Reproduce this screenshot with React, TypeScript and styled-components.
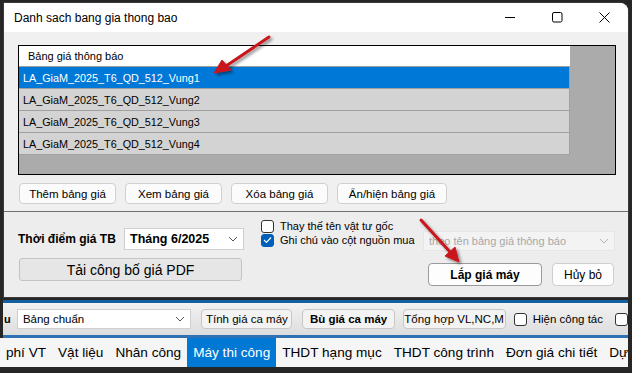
import React from 'react'
import styled, { createGlobalStyle } from 'styled-components'

const GlobalStyle = createGlobalStyle`
  html, body {
    margin: 0;
    padding: 0;
    background: #262626;
    overflow: hidden;
  }
  * {
    box-sizing: border-box;
  }
`

const Screen = styled.div`
  position: relative;
  width: 632px;
  height: 373px;
  background: #262626;
  display: flex;
  flex-direction: column;
  font-family: "Liberation Sans", Arial, sans-serif;
  color: #000;
  overflow: hidden;
`

const Dialog = styled.div`
  margin: 3px 4px 0 4px;
  height: 294px;
  background: #f0f0f0;
  border-top-right-radius: 8px;
  display: flex;
  flex-direction: column;
  overflow: hidden;
  box-shadow: 0 0 0 1px #3a3a3a;
`

const TitleBar = styled.div`
  height: 29px;
  background: #ffffff;
  display: flex;
  align-items: center;
  padding-left: 10px;
  flex-shrink: 0;
`

const TitleText = styled.div`
  font-size: 12px;
  flex: 1;
  padding-top: 1px;
`

const WinButton = styled.div`
  width: 47px;
  height: 29px;
  display: flex;
  align-items: center;
  justify-content: center;
`

const ListPanel = styled.div`
  margin: 13px 12px 0 14px;
  height: 130px;
  background: #ababab;
  border: 1px solid #000;
  flex-shrink: 0;
`

const ListTable = styled.div`
  width: 551px;
  display: flex;
  flex-direction: column;
`

const HeaderCell = styled.div`
  height: 21px;
  background: #ffffff;
  border-bottom: 1px solid #a0a0a0;
  font-size: 11px;
  display: flex;
  align-items: center;
  padding-left: 9px;
`

const Row = styled.div<{ $selected?: boolean }>`
  height: 22px;
  background: ${p => (p.$selected ? '#0078d7' : '#d3d3d3')};
  color: ${p => (p.$selected ? '#ffffff' : '#000000')};
  border-bottom: 1px solid #a0a0a0;
  border-right: 1px solid #a0a0a0;
  font-size: 10.8px;
  display: flex;
  align-items: center;
  padding-left: 4px;
`

const ActionRow = styled.div`
  display: flex;
  gap: 9px;
  margin: 8px 0 0 15px;
  height: 21px;
`

const SoftButton = styled.div<{ $w: number }>`
  width: ${p => p.$w}px;
  height: 21px;
  background: #fbfbfb;
  border: 1px solid #d0d0d0;
  border-radius: 4px;
  font-size: 11.5px;
  display: flex;
  align-items: center;
  justify-content: center;
`

const Separator = styled.div`
  margin-top: 7px;
  height: 1px;
  background: #6f6f6f;
  flex-shrink: 0;
`

const LowerPanel = styled.div`
  flex: 1;
  display: flex;
  padding-left: 14px;
  background: #ededed;
`

const LeftCol = styled.div`
  width: 226px;
  padding-top: 16px;
  display: flex;
  flex-direction: column;
`

const DateRow = styled.div`
  display: flex;
  align-items: center;
  height: 22px;
`

const BoldLabel = styled.div`
  width: 106px;
  font-size: 12px;
  font-weight: 700;
`

const Select = styled.div<{ $w: number; $h: number; $disabled?: boolean }>`
  width: ${p => p.$w}px;
  height: ${p => p.$h}px;
  background: ${p => (p.$disabled ? '#f3f3f3' : '#ffffff')};
  border: 1px solid ${p => (p.$disabled ? '#e6e6e6' : '#cfcfcf')};
  display: flex;
  align-items: center;
  justify-content: space-between;
  padding: 0 5px 0 5px;
`

const SelectText = styled.span<{ $bold?: boolean; $muted?: boolean; $size: number }>`
  font-size: ${p => p.$size}px;
  font-weight: ${p => (p.$bold ? 700 : 400)};
  color: ${p => (p.$muted ? '#a8a8a8' : '#000')};
  white-space: nowrap;
`

const WideButton = styled.div`
  margin: 8px 0 0 1px;
  width: 223px;
  height: 23px;
  background: #e6e6e6;
  border: 1px solid #c4c4c4;
  border-radius: 3px;
  font-size: 14px;
  display: flex;
  align-items: center;
  justify-content: center;
`

const MidCol = styled.div`
  width: 162px;
  margin-left: 17px;
  padding-top: 7px;
  display: flex;
  flex-direction: column;
`

const CheckRow = styled.div`
  display: flex;
  align-items: center;
  height: 14px;
  gap: 6px;
  font-size: 11px;
  white-space: nowrap;
`

const Box = styled.div<{ $checked?: boolean }>`
  width: 13px;
  height: 13px;
  border-radius: 3px;
  border: 1px solid ${p => (p.$checked ? '#005fb8' : '#333')};
  background: ${p => (p.$checked ? '#005fb8' : '#fff')};
  display: flex;
  align-items: center;
  justify-content: center;
  flex-shrink: 0;
`

const RightCol = styled.div`
  width: 192px;
  padding-top: 19px;
  display: flex;
  flex-direction: column;
`

const DialogButtons = styled.div`
  display: flex;
  justify-content: flex-end;
  gap: 10px;
  margin-top: 12px;
  padding-right: 1px;
`

const DialogButton = styled.div<{ $w: number; $primary?: boolean }>`
  width: ${p => p.$w}px;
  height: 23px;
  background: #fdfdfd;
  border: 1px solid ${p => (p.$primary ? '#9a9a9a' : '#cfcfcf')};
  border-radius: 4px;
  font-size: 12px;
  font-weight: ${p => (p.$primary ? 700 : 400)};
  display: flex;
  align-items: center;
  justify-content: center;
`

const AppArea = styled.div`
  margin: 3px 4px 0 3px;
  display: flex;
  flex-direction: column;
  border-top: 3px solid #15609f;
`

const Toolbar = styled.div`
  height: 35px;
  background: linear-gradient(#f2f2f2, #dddddd);
  display: flex;
  align-items: center;
  border-bottom: 3px solid #2f72b3;
`

const CutLabel = styled.span`
  font-size: 11px;
  font-weight: 700;
  margin-left: 1px;
  width: 13px;
`

const ToolButton = styled.div<{ $w: number; $bold?: boolean; $ml: number }>`
  margin-left: ${p => p.$ml}px;
  width: ${p => p.$w}px;
  height: 20px;
  background: #f3f3f3;
  border: 1px solid #c7c7c7;
  border-radius: 4px;
  font-size: 11.5px;
  font-weight: ${p => (p.$bold ? 700 : 400)};
  display: flex;
  align-items: center;
  justify-content: center;
  white-space: nowrap;
`

const ToolCheck = styled.div<{ $ml: number }>`
  margin-left: ${p => p.$ml}px;
  display: flex;
  align-items: center;
  gap: 6px;
  font-size: 11.5px;
  white-space: nowrap;
`

const TabBar = styled.div`
  height: 29px;
  background: #f5f5f5;
  display: flex;
  margin-left: -3px;
  overflow: hidden;
`

const Tab = styled.div<{ $active?: boolean }>`
  height: 29px;
  padding: 0 6px 0 6px;
  display: flex;
  align-items: center;
  font-size: 13.6px;
  white-space: nowrap;
  background: ${p => (p.$active ? '#0078d4' : 'transparent')};
  color: ${p => (p.$active ? '#ffffff' : '#000000')};
`

const Overlay = styled.svg`
  position: absolute;
  left: 0;
  top: 0;
  pointer-events: none;
`

const Chevron = ({ color = '#555' }: { color?: string }) => (
  <svg width="10" height="6" viewBox="0 0 10 6">
    <path d="M1 1 L5 5 L9 1" fill="none" stroke={color} strokeWidth="1" />
  </svg>
)

const Check = () => (
  <svg width="9" height="8" viewBox="0 0 9 8">
    <path d="M1 4 L3.5 6.5 L8 1.5" fill="none" stroke="#fff" strokeWidth="1.2" />
  </svg>
)

const rows = [
  'LA_GiaM_2025_T6_QD_512_Vung1',
  'LA_GiaM_2025_T6_QD_512_Vung2',
  'LA_GiaM_2025_T6_QD_512_Vung3',
  'LA_GiaM_2025_T6_QD_512_Vung4',
]

const tabs = ['phí VT', 'Vật liệu', 'Nhân công', 'Máy thi công', 'THDT hạng mục', 'THDT công trình', 'Đơn giá chi tiết', 'Dự']

const App = () => {
  return (
    <Screen>
      <GlobalStyle />
      <Dialog>
        <TitleBar>
          <TitleText>Danh sach bang gia thong bao</TitleText>
          <WinButton>
            <svg width="11" height="11" viewBox="0 0 11 11">
              <path d="M0 5.5 H10" stroke="#000" strokeWidth="1" />
            </svg>
          </WinButton>
          <WinButton>
            <svg width="11" height="11" viewBox="0 0 11 11">
              <rect x="0.5" y="0.5" width="9.5" height="9.5" rx="1.5" fill="none" stroke="#000" strokeWidth="1" />
            </svg>
          </WinButton>
          <WinButton>
            <svg width="11" height="11" viewBox="0 0 11 11">
              <path d="M0.5 0.5 L10.5 10.5 M10.5 0.5 L0.5 10.5" stroke="#000" strokeWidth="1" />
            </svg>
          </WinButton>
        </TitleBar>

        <ListPanel>
          <ListTable>
            <HeaderCell>Bảng giá thông báo</HeaderCell>
            {rows.map((r, i) => (
              <Row key={r} $selected={i === 0}>{r}</Row>
            ))}
          </ListTable>
        </ListPanel>

        <ActionRow>
          <SoftButton $w={97}>Thêm bảng giá</SoftButton>
          <SoftButton $w={97}>Xem bảng giá</SoftButton>
          <SoftButton $w={97}>Xóa bảng giá</SoftButton>
          <SoftButton $w={110}>Ẩn/hiện bảng giá</SoftButton>
        </ActionRow>

        <Separator />

        <LowerPanel>
          <LeftCol>
            <DateRow>
              <BoldLabel>Thời điểm giá TB</BoldLabel>
              <Select $w={120} $h={22}>
                <SelectText $bold $size={12.5}>Tháng 6/2025</SelectText>
                <Chevron />
              </Select>
            </DateRow>
            <WideButton>Tải công bố giá PDF</WideButton>
          </LeftCol>

          <MidCol>
            <CheckRow>
              <Box />
              Thay thế tên vật tư gốc
            </CheckRow>
            <CheckRow>
              <Box $checked><Check /></Box>
              Ghi chú vào cột nguồn mua
            </CheckRow>
          </MidCol>

          <RightCol>
            <Select $w={192} $h={20} $disabled>
              <SelectText $muted $size={11}>theo tên bảng giá thông báo</SelectText>
              <Chevron color="#b5b5b5" />
            </Select>
            <DialogButtons>
              <DialogButton $w={114} $primary>Lắp giá máy</DialogButton>
              <DialogButton $w={62}>Hủy bỏ</DialogButton>
            </DialogButtons>
          </RightCol>
        </LowerPanel>
      </Dialog>

      <AppArea>
        <Toolbar>
          <CutLabel>u</CutLabel>
          <Select $w={176} $h={20}>
            <SelectText $size={11.5}>Bảng chuẩn</SelectText>
            <Chevron />
          </Select>
          <ToolButton $ml={10} $w={92}>Tính giá ca máy</ToolButton>
          <ToolButton $ml={10} $w={93} $bold>Bù giá ca máy</ToolButton>
          <ToolButton $ml={8} $w={104}>Tổng hợp VL,NC,M</ToolButton>
          <ToolCheck $ml={8}>
            <Box />
            Hiện công tác
          </ToolCheck>
          <ToolCheck $ml={12}>
            <Box />
          </ToolCheck>
        </Toolbar>
        <TabBar>
          {tabs.map(t => (
            <Tab key={t} $active={t === 'Máy thi công'}>{t}</Tab>
          ))}
        </TabBar>
      </AppArea>

      <Overlay width="632" height="373" viewBox="0 0 632 373">
        <defs>
          <filter id="sh" x="-20%" y="-20%" width="140%" height="140%">
            <feDropShadow dx="2" dy="2" stdDeviation="1.5" floodColor="#000" floodOpacity="0.45" />
          </filter>
        </defs>
        <g filter="url(#sh)" fill="#c8161d" stroke="#c8161d">
          <path d="M269 37 L226 66" strokeWidth="3" strokeLinecap="round" />
          <path d="M214 73 L222 60 L231 70 Z" strokeWidth="1" />
          <path d="M421 220 L451 253" strokeWidth="3" strokeLinecap="round" />
          <path d="M459 262 L445 256 L455 247 Z" strokeWidth="1" />
        </g>
      </Overlay>
    </Screen>
  )
}

export default App
